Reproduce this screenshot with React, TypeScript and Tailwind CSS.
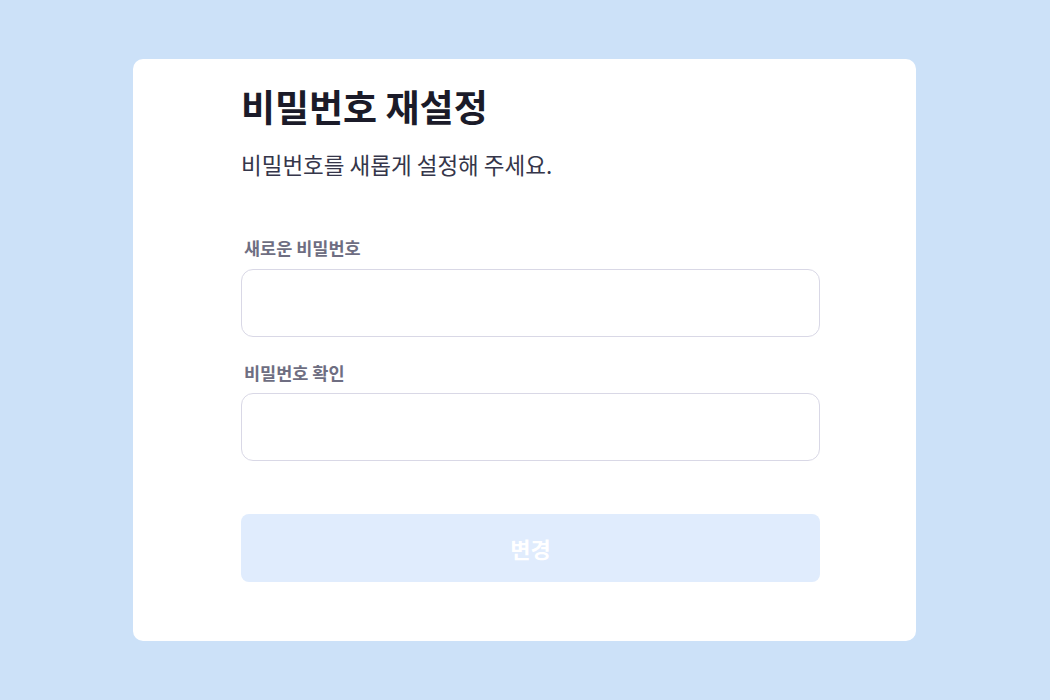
export default function App() {
  return (
    <div
      className="flex min-h-[700px] w-full items-start bg-[#cce1f8] pl-[133px] pt-[59px]"
      style={{ fontFamily: '"Noto Sans CJK KR", "Noto Sans", sans-serif' }}
    >
      <div className="w-[783px] rounded-[10px] bg-white pb-[59px] pl-[108px] pr-[96px] pt-[23px]">
        <h1 className="text-[37px] font-bold leading-[48px] text-[#1b1b29]">
          비밀번호 재설정
        </h1>
        <p className="mt-[18px] text-[22.5px] leading-[32px] text-[#35364a]">
          비밀번호를 새롭게 설정해 주세요.
        </p>

        <form className="mt-[56px] flex flex-col" onSubmit={(e) => e.preventDefault()}>
          <label className="ml-[3px] text-[17.5px] font-bold leading-[24px] text-[#6e6e82]">
            새로운 비밀번호
          </label>
          <input
            type="password"
            className="mt-[9px] h-[68px] w-full rounded-[12px] border border-[#d9d8e6] px-4 outline-none"
          />

          <label className="ml-[3px] mt-[24px] text-[17.5px] font-bold leading-[24px] text-[#6e6e82]">
            비밀번호 확인
          </label>
          <input
            type="password"
            className="mt-[8px] h-[68px] w-full rounded-[12px] border border-[#d9d8e6] px-4 outline-none"
          />

          <button
            type="submit"
            disabled
            className="mt-[53px] h-[68px] w-full rounded-[8px] bg-[#e0ecfd] text-[22px] font-bold text-white"
          >
            변경
          </button>
        </form>
      </div>
    </div>
  );
}
